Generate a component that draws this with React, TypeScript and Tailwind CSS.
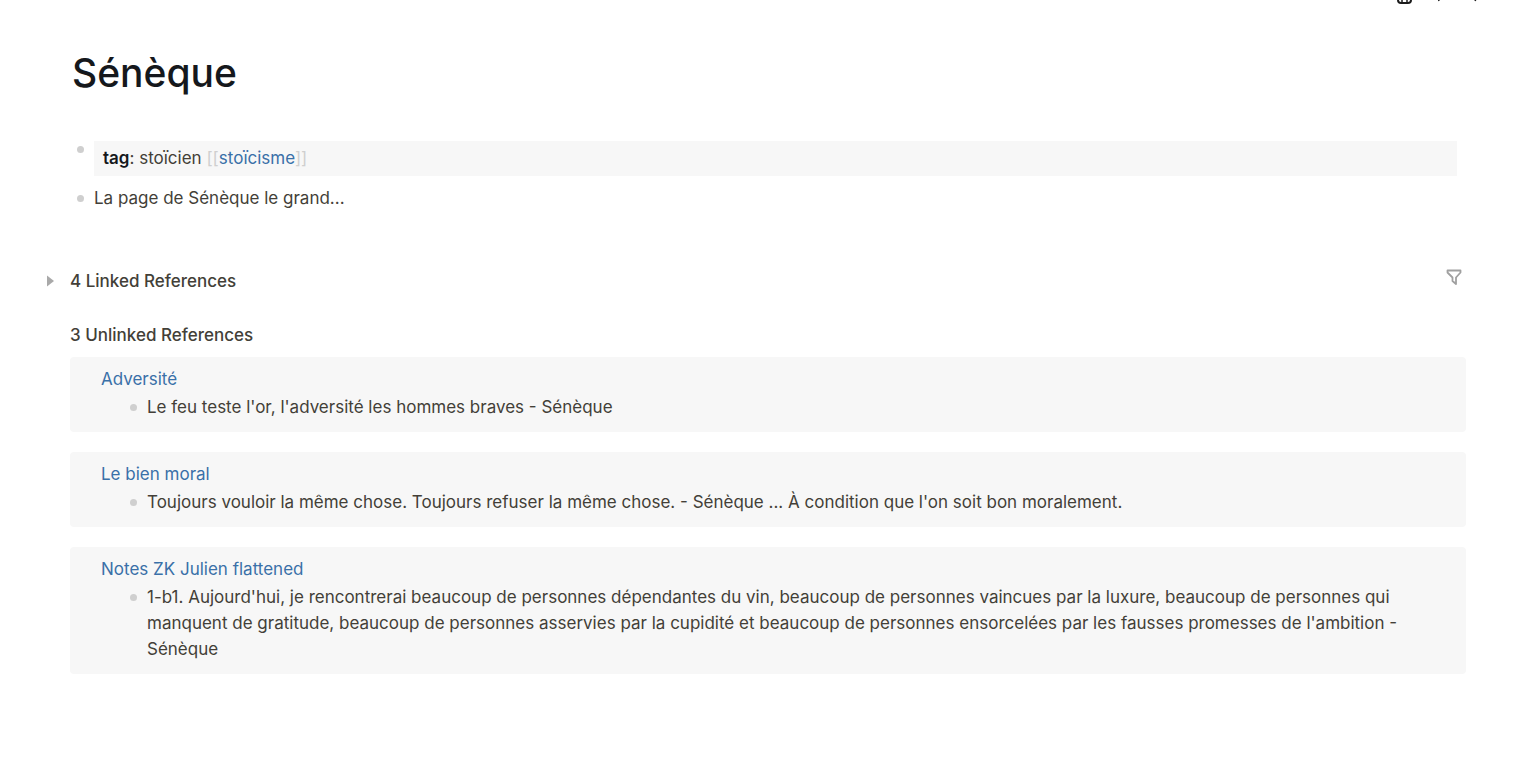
import React from 'react';

interface Reference {
  page: string;
  text: string;
}

const references: Reference[] = [
  {
    page: 'Adversité',
    text: "Le feu teste l'or, l'adversité les hommes braves - Sénèque",
  },
  {
    page: 'Le bien moral',
    text: "Toujours vouloir la même chose. Toujours refuser la même chose. - Sénèque ... À condition que l'on soit bon moralement.",
  },
  {
    page: 'Notes ZK Julien flattened',
    text: "1-b1. Aujourd'hui, je rencontrerai beaucoup de personnes dépendantes du vin, beaucoup de personnes vaincues par la luxure, beaucoup de personnes qui manquent de gratitude, beaucoup de personnes asservies par la cupidité et beaucoup de personnes ensorcelées par les fausses promesses de l'ambition - Sénèque",
  },
];

const Bullet: React.FC = () => <span className="mt-[10px] size-[7px] shrink-0 rounded-full bg-[#cfcfcf]" />;

const Toolbar: React.FC = () => (
  <header className="flex h-1 items-end justify-end gap-[22px] overflow-hidden pr-12 text-[#1c1c1c]">
    <button type="button" aria-label="Journals">
      <svg className="block h-5 w-4" viewBox="0 0 16 20" fill="none" stroke="currentColor" strokeWidth="2">
        <rect x="2" y="3" width="13" height="16" rx="3" />
        <path d="M2 8h13M6 12v7M11 12v7" strokeWidth="1.500" />
      </svg>
    </button>
    <button type="button" aria-label="Back">
      <svg className="block h-5 w-4" viewBox="0 0 16 20" fill="none" stroke="currentColor" strokeWidth="1.500">
        <path d="M10 4L3 10l2 7" />
      </svg>
    </button>
    <button type="button" aria-label="Forward">
      <svg className="block h-5 w-4" viewBox="0 0 16 20" fill="none" stroke="currentColor" strokeWidth="1.500">
        <path d="M2 4l5 6-4 7" />
      </svg>
    </button>
  </header>
);

const ReferenceCard: React.FC<Reference> = ({ page, text }) => (
  <article className="rounded-[4px] bg-[#f7f7f7] pt-[9px] pr-8 pb-3 pl-[31px]">
    <a href="#" className="block w-fit text-[#3a70a8]">
      {page}
    </a>
    <div className="mt-[2px] flex gap-[10px] pl-[29px]">
      <Bullet />
      <p>{text}</p>
    </div>
  </article>
);

const App: React.FC = () => {
  return (
    <div className="bg-white font-['Inter',sans-serif] text-[17px] leading-[26px] text-[#433f38]">
      <Toolbar />
      <main className="px-[70px] pt-[44px] pb-16">
        <h1 className="pl-[2px] text-[39px] leading-[50px] font-medium text-[#15181c]">Sénèque</h1>

        <div className="mt-[43px] flex gap-[10px] pr-[9px] pl-[7px]">
          <span className="mt-[5px] size-[7px] shrink-0 rounded-full bg-[#cfcfcf]" />
          <div className="grow bg-[#f7f7f7] px-[9px] pt-[4px] pb-[5px]">
            <a href="#" className="font-semibold text-[#15181c]">tag</a>
            <span>: stoïcien </span>
            <span className="text-[#cfcfcf]">[[</span>
            <a href="#" className="text-[#3a70a8]">stoïcisme</a>
            <span className="text-[#cfcfcf]">]]</span>
          </div>
        </div>
        <div className="mt-[9px] flex gap-[10px] pl-[7px]">
          <Bullet />
          <p>La page de Sénèque le grand...</p>
        </div>

        <section className="mt-[57px] -ml-6 flex items-center">
          <button type="button" aria-label="Expand linked references" className="w-6">
            <svg className="size-3" viewBox="0 0 12 12" fill="#a9a9a9">
              <path d="M1 0.500L8 6l-7 5.500z" />
            </svg>
          </button>
          <h2 className="grow font-medium">4 Linked References</h2>
          <button type="button" aria-label="Filter" className="mr-1 pb-2">
            <svg className="size-4" viewBox="0 0 16 16" fill="none" stroke="#a0a0a0" strokeWidth="1.800" strokeLinejoin="round">
              <path d="M1.500 1.500h13v2L10 8.500V15l-3.500-3V8.500L1.500 3.500z" />
            </svg>
          </button>
        </section>

        <section className="mt-7">
          <h2 className="font-medium">3 Unlinked References</h2>
          <div className="mt-[9px] flex flex-col gap-5">
            {references.map((reference) => (
              <ReferenceCard key={reference.page} {...reference} />
            ))}
          </div>
        </section>
      </main>
    </div>
  );
};

export default App;
